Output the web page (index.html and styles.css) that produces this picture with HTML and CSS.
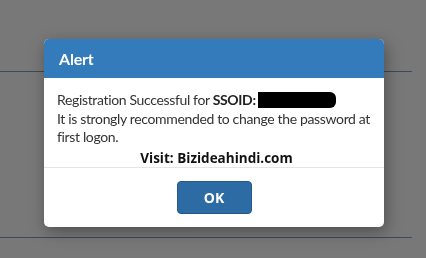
FILE: index.html
```html
<!DOCTYPE html>
<html lang="en">
<head>
<meta charset="UTF-8" />
<meta name="viewport" content="width=device-width, initial-scale=1" />
<title>Alert</title>
<link rel="stylesheet" href="styles.css">
</head>
<body>

  <!-- page behind the dimmed overlay -->
  <div class="page">
    <div class="rule rule-top"></div>
    <div class="rule rule-bottom"></div>
  </div>

  <div class="overlay">
    <div class="modal" role="alertdialog" aria-labelledby="alertTitle">
      <div class="modal-header">
        <h4 id="alertTitle">Alert</h4>
      </div>
      <div class="modal-body">
        <p>Registration Successful for <b>SSOID:</b><span class="redact"></span><br>
        It is strongly recommended to change the password at<br>
        first logon.</p>
        <p class="visit">Visit: Bizideahindi.com</p>
      </div>
      <div class="modal-footer">
        <button class="btn-ok" type="button">OK</button>
      </div>
    </div>
  </div>

</body>
</html>
```

FILE: styles.css
```css
body {
  margin: 0;
  height: 258px;
  background: #787878;
  font-family: Lato, 'Open Sans', sans-serif;
  overflow: hidden;
}
.page {
  margin-right: 14px;
  padding-top: 71px;
}
.rule {
  height: 1px;
  background: #3e4a58;
}
.rule-bottom {
  margin-top: 165px;
}
.overlay {
  position: fixed;
  inset: 0;
}
.modal {
  position: absolute;
  left: 44px;
  top: 39px;
  width: 340px;
  background: #fff;
  border-radius: 5px;
  overflow: hidden;
  box-shadow: 2px 5px 16px rgba(0,0,0,0.35);
}
.modal-header {
  height: 39px;
  background: #347bbb;
  display: flex;
  align-items: center;
  padding: 0 15px;
}
.modal-header h4 {
  margin: 0;
  color: #fff;
  font-size: 16px;
  font-weight: 700;
  letter-spacing: -0.2px;
}
.modal-body {
  padding: 13px 8px 0 13px;
  color: #333;
  font-size: 14px;
  letter-spacing: -0.35px;
  line-height: 18.5px;
  white-space: nowrap;
}
.modal-body p {
  margin: 0;
}
.modal-body b {
  font-weight: 700;
  color: #222;
}
.redact {
  display: inline-block;
  width: 78px;
  height: 16px;
  margin-left: 2px;
  background: #000;
  border-radius: 0 6px 6px 0;
  vertical-align: -3px;
}
.visit {
  text-align: center;
  font-family: 'Open Sans', sans-serif;
  font-weight: 700;
  font-size: 13.5px;
  line-height: 17px;
  letter-spacing: 0;
  color: #111;
  padding-top: 3px;
}
.modal-footer {
  border-top: 1px solid #e5e5e5;
  padding: 13px 0;
  display: flex;
  justify-content: center;
}
.btn-ok {
  width: 75px;
  height: 33px;
  background: #2c6ba3;
  color: #fff;
  border: 1px solid #24598a;
  border-radius: 4px;
  font-family: 'Open Sans', sans-serif;
  font-weight: 700;
  font-size: 14px;
}
```
